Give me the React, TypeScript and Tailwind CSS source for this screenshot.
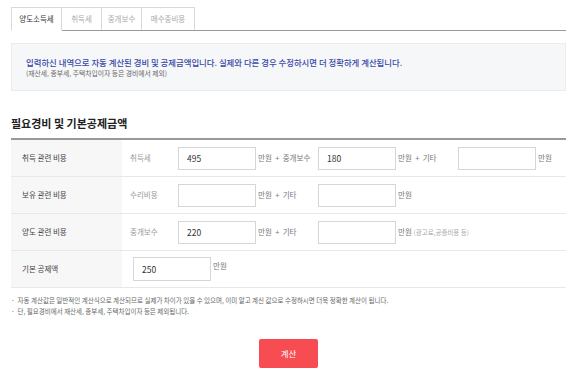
const font = { fontFamily: '"Noto Sans CJK KR", "Noto Sans", sans-serif' }

const TABS = ['양도소득세', '취득세', '중개보수', '매수중비용']

function Field({ value, className = '' }: { value?: string; className?: string }) {
  return (
    <input
      readOnly
      value={value ?? ''}
      className={`h-[23px] w-[78px] shrink-0 border border-[#d6d6d6] bg-white px-[8px] text-[8.5px] text-[#333] outline-none ${className}`}
    />
  )
}

function Unit({ text, wide = false }: { text: string; wide?: boolean }) {
  return (
    <span className={`shrink-0 whitespace-pre pl-[2px] text-[7.5px] text-[#777] ${wide ? 'w-[62px]' : ''}`}>{text}</span>
  )
}

function Row({ label, children }: { label: string; children: React.ReactNode }) {
  return (
    <div className="flex h-[37px] border-b border-[#e8e8e8]">
      <div className="flex w-[111px] shrink-0 items-center bg-[#f7f7f7] pl-[11px] text-[7.5px] text-[#444]">
        {label}
      </div>
      <div className="flex flex-1 items-center">{children}</div>
    </div>
  )
}

function Sub({ text }: { text: string }) {
  return <span className="w-[56px] shrink-0 pl-[8px] text-[7.5px] text-[#999]">{text}</span>
}

export default function App() {
  return (
    <div className="h-[377px] w-[580px] overflow-hidden bg-white pl-[11px] pr-[14px]" style={font}>
      <div className="mt-[7px] flex border-b border-[#9a9a9a]">
        {TABS.map((t, i) => (
          <div
            key={t}
            className={`flex h-[23px] items-center justify-center border-t border-r border-[#d9d9d9] text-[7.5px] ${
              i === 0
                ? 'relative -mb-px h-[24px] w-[51px] border-l border-b border-b-white border-[#aaa] bg-white pb-px text-[#333]'
                : 'text-[#aaa]'
            } ${i === 1 ? 'w-[40px]' : i === 2 ? 'w-[40px]' : i === 3 ? 'w-[53px]' : ''}`}
          >
            {t}
          </div>
        ))}
      </div>

      <div className="mt-[12px] h-[48px] border border-[#ebebeb] bg-[#f6f7f9] px-[14px] pt-[12px]">
        <p className="text-[8.4px] font-medium leading-[12px] text-[#3848a8]">
          입력하신 내역으로 자동 계산된 경비 및 공제금액입니다. 실제와 다른 경우 수정하시면 더 정확하게 계산됩니다.
        </p>
        <p className="text-[6.8px] leading-[11px] text-[#666]">(재산세, 종부세, 주택차입이자 등은 경비에서 제외)</p>
      </div>

      <h2 className="mt-[25px] text-[11px] font-bold leading-[14px] text-[#222]">필요경비 및 기본공제금액</h2>

      <div className="mt-[8px] border-t-2 border-[#999]">
        <Row label="취득 관련 비용">
          <Sub text="취득세" />
          <Field value="495" />
          <Unit text="만원  +  중개보수" wide />
          <Field value="180" />
          <Unit text="만원  +  기타" wide />
          <Field />
          <Unit text="만원" />
        </Row>
        <Row label="보유 관련 비용">
          <Sub text="수리비용" />
          <Field />
          <Unit text="만원  +  기타" wide />
          <Field />
          <Unit text="만원" />
        </Row>
        <Row label="양도 관련 비용">
          <Sub text="중개보수" />
          <Field value="220" />
          <Unit text="만원  +  기타" wide />
          <Field />
          <span className="shrink-0 pl-[2px] text-[7.5px] text-[#777]">
            만원 <span className="text-[6.5px] text-[#aaa]">(광고료,공증비용 등)</span>
          </span>
        </Row>
        <Row label="기본 공제액">
          <span className="w-[11px] shrink-0" />
          <Field value="250" className="h-[24px]" />
          <span className="shrink-0 self-start pl-[2px] pt-[9px] text-[7.5px] text-[#777]">만원</span>
        </Row>
      </div>

      <ul className="mt-[7px] text-[6.5px] leading-[11px] text-[#666]">
        <li>·&nbsp; 자동 계산값은 일반적인 계산식으로 계산되므로 실제가 차이가 있을 수 있으며, 이미 알고 계신 값으로 수정하시면 더욱 정확한 계산이 됩니다.</li>
        <li>·&nbsp; 단, 필요경비에서 재산세, 종부세, 주택차입이자 등은 제외됩니다.</li>
      </ul>

      <div className="mt-[22px] flex justify-center">
        <button className="h-[29px] w-[59px] rounded-[2px] bg-[#f74c52] text-[8.5px] text-white">계산</button>
      </div>
    </div>
  )
}
